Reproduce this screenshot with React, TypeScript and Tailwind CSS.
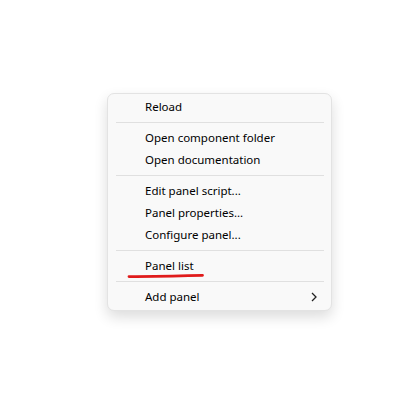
import React from 'react';

type MenuEntry = { label: string; submenu?: boolean; marked?: boolean } | 'sep';

const entries: MenuEntry[] = [
  { label: 'Reload' },
  'sep',
  { label: 'Open component folder' },
  { label: 'Open documentation' },
  'sep',
  { label: 'Edit panel script...' },
  { label: 'Panel properties...' },
  { label: 'Configure panel...' },
  'sep',
  { label: 'Panel list', marked: true },
  'sep',
  { label: 'Add panel', submenu: true },
];

const MenuItem: React.FC<{ label: string; submenu?: boolean; marked?: boolean }> = ({ label, submenu, marked }) => (
  <div className="relative flex h-[22px] items-center pl-[37px] pr-[14px] text-[11.5px] text-black">
    <span className="flex-1">{label}</span>
    {submenu && (
      <svg className="h-[10px] w-[6px]" viewBox="0 0 6 10" fill="none" stroke="#222" strokeWidth="1.3">
        <path d="M1 1l4 4-4 4" />
      </svg>
    )}
    {/* hand-drawn red underline */}
    {marked && (
      <svg className="pointer-events-none absolute left-[19px] top-[18px]" width="80" height="6" viewBox="0 0 80 6">
        <path d="M2 3.6 C 20 3.4, 45 3.2, 75.5 2.4" stroke="#e01b1b" strokeWidth="2.8" strokeLinecap="round" fill="none" />
      </svg>
    )}
  </div>
);

export default function App() {
  return (
    <div className="h-[402px] w-[414px] bg-white pl-[107px] pt-[93px]" style={{ fontFamily: '"Noto Sans", "Open Sans", sans-serif' }}>
      <div className="w-[225px] rounded-[7px] border border-[#e3e3e3] bg-[#f9f9f9] pb-[2px] pt-[2px] shadow-[0_6px_14px_rgba(0,0,0,0.14)]">
        {entries.map((e, i) =>
          e === 'sep' ? (
            <div key={i} className="py-[4px] pl-[8px] pr-[7px]">
              <div className="h-px bg-[#e0e0e0]" />
            </div>
          ) : (
            <MenuItem key={i} {...e} />
          )
        )}
      </div>
    </div>
  );
}
